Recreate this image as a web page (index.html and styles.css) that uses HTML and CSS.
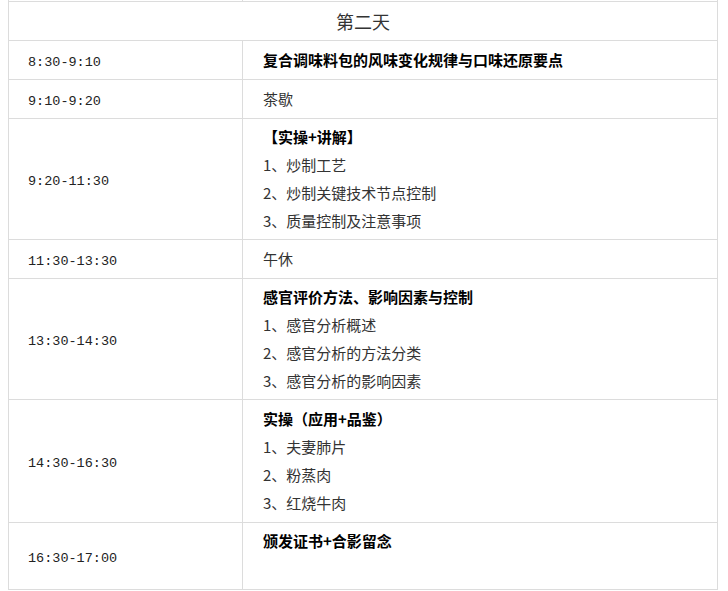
FILE: index.html
```html
<!DOCTYPE html>
<html lang="zh-CN">
<head>
<meta charset="utf-8">
<title>第二天</title>
<link rel="stylesheet" href="styles.css">
</head>
<body>
<table class="schedule">
  <colgroup><col class="c-time"><col class="c-topic"></colgroup>
  <tr class="prev"><td></td><td></td></tr>
  <tr class="head"><td colspan="2">第二天</td></tr>
  <tr class="one"><td class="time">8:30-9:10</td><td><b>复合调味料包的风味变化规律与口味还原要点</b></td></tr>
  <tr class="one"><td class="time">9:10-9:20</td><td>茶歇</td></tr>
  <tr><td class="time">9:20-11:30</td><td><b>【实操+讲解】</b><br>1、炒制工艺<br>2、炒制关键技术节点控制<br>3、质量控制及注意事项</td></tr>
  <tr class="one"><td class="time">11:30-13:30</td><td>午休</td></tr>
  <tr><td class="time">13:30-14:30</td><td><b>感官评价方法、影响因素与控制</b><br>1、感官分析概述<br>2、感官分析的方法分类<br>3、感官分析的影响因素</td></tr>
  <tr class="tall"><td class="time">14:30-16:30</td><td><b>实操（应用+品鉴）</b><br>1、夫妻肺片<br>2、粉蒸肉<br>3、红烧牛肉</td></tr>
  <tr class="last"><td class="time">16:30-17:00</td><td class="top"><b>颁发证书+合影留念</b></td></tr>
</table>
</body>
</html>
```

FILE: styles.css
```css
html, body {
  margin: 0;
  padding: 0;
  background: #fff;
}
body {
  padding-left: 8px;
  font-family: "Noto Sans CJK SC", "Noto Sans", sans-serif;
  font-size: 15px;
  color: #333;
}
.schedule {
  border-collapse: collapse;
  width: 710px;
  margin-top: -22px;
  table-layout: fixed;
}
.c-time { width: 234px; }
.schedule td {
  border: 1px solid #dcdcdc;
  padding: 4px 20px 4px 20px;
  line-height: 28px;
  vertical-align: middle;
  text-align: left;
}
.schedule .prev td {
  height: 22px;
  padding: 0;
}
.schedule .head td {
  height: 30px;
  text-align: center;
  font-size: 18px;
  color: #333;
  padding: 4px 0 4px 0;
}
.schedule .one td { height: 30px; }
.schedule .tall td { padding-top: 5px; padding-bottom: 5px; }
.schedule .last td { height: 58px; }
.schedule td.top { vertical-align: top; }
.schedule td.time {
  font-family: "Liberation Mono", "DejaVu Sans Mono", monospace;
  font-size: 13.5px;
  padding: 7px 20px 1px 19px;
  color: #222;
}
.schedule b {
  font-weight: bold;
  color: #000;
}
```
